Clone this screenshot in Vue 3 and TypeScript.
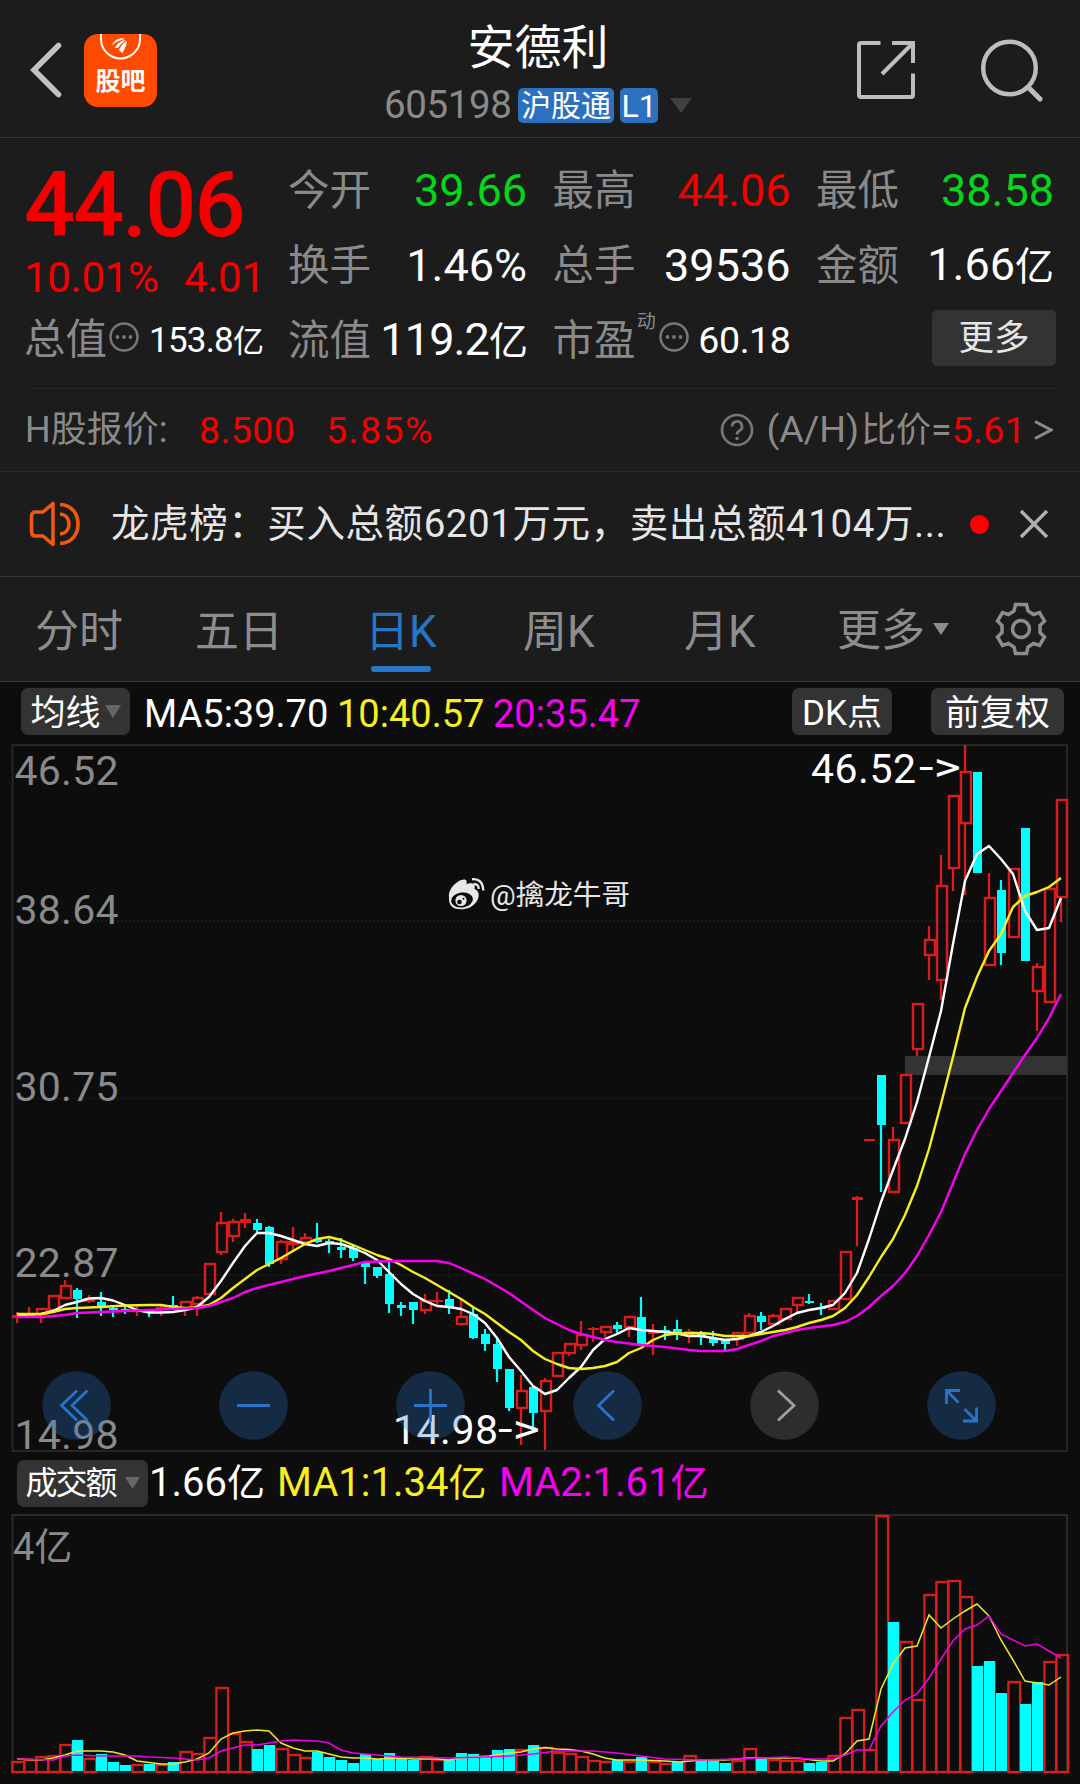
<script setup lang="ts">
type Kind = 'u' | 'd'
type Candle = [Kind, number, number, number, number]

const STEP = 12
const X0 = 17

// kind (u = rising, d = falling), high, body top, body bottom, low
const candles: Candle[] = [
  ['u', 1311, 1314, 1317, 1322], ['u', 1306, 1313, 1315, 1316], ['u', 1307, 1307, 1314, 1322], ['u', 1294, 1294, 1310, 1310],
  ['u', 1279, 1284, 1298, 1298], ['d', 1287, 1289, 1298, 1317], ['u', 1294, 1297, 1301, 1302], ['d', 1291, 1301, 1306, 1315],
  ['d', 1305, 1307, 1309, 1316], ['d', 1305, 1308, 1311, 1313], ['u', 1305, 1308, 1311, 1315], ['d', 1308, 1310, 1312, 1316],
  ['u', 1305, 1306, 1309, 1315], ['d', 1295, 1304, 1306, 1307], ['u', 1300, 1300, 1309, 1315], ['u', 1295, 1296, 1304, 1315],
  ['u', 1262, 1262, 1294, 1294], ['u', 1211, 1221, 1252, 1254], ['u', 1218, 1220, 1236, 1241], ['u', 1212, 1218, 1222, 1227],
  ['d', 1218, 1222, 1229, 1231], ['d', 1225, 1226, 1263, 1266], ['u', 1239, 1240, 1259, 1263], ['u', 1226, 1240, 1244, 1250],
  ['u', 1232, 1236, 1242, 1244], ['d', 1222, 1238, 1241, 1242], ['d', 1238, 1240, 1243, 1252], ['d', 1237, 1246, 1249, 1257],
  ['d', 1245, 1247, 1257, 1260], ['d', 1261, 1261, 1266, 1283], ['d', 1266, 1266, 1275, 1277], ['d', 1261, 1273, 1303, 1312],
  ['d', 1301, 1304, 1307, 1315], ['d', 1301, 1301, 1309, 1323], ['u', 1293, 1299, 1310, 1313], ['u', 1291, 1299, 1301, 1305],
  ['d', 1289, 1298, 1306, 1313], ['u', 1298, 1315, 1324, 1324], ['d', 1306, 1313, 1337, 1338], ['d', 1328, 1333, 1343, 1350],
  ['d', 1337, 1343, 1368, 1381], ['d', 1368, 1368, 1407, 1410], ['u', 1374, 1389, 1408, 1444], ['d', 1386, 1386, 1412, 1429],
  ['u', 1377, 1379, 1411, 1449], ['u', 1351, 1351, 1376, 1376], ['u', 1342, 1342, 1353, 1355], ['u', 1320, 1333, 1345, 1349],
  ['u', 1326, 1327, 1329, 1341], ['u', 1325, 1325, 1332, 1336], ['d', 1321, 1324, 1328, 1332], ['u', 1315, 1315, 1327, 1336],
  ['d', 1296, 1316, 1343, 1345], ['u', 1323, 1331, 1333, 1354], ['d', 1325, 1329, 1331, 1339], ['d', 1319, 1328, 1332, 1339],
  ['u', 1328, 1330, 1334, 1342], ['d', 1330, 1332, 1335, 1344], ['d', 1330, 1337, 1342, 1345], ['d', 1338, 1340, 1343, 1349],
  ['u', 1331, 1331, 1339, 1345], ['u', 1312, 1314, 1333, 1333], ['d', 1311, 1315, 1321, 1329], ['u', 1313, 1314, 1324, 1324],
  ['u', 1307, 1307, 1319, 1319], ['u', 1296, 1296, 1305, 1312], ['d', 1293, 1300, 1302, 1303], ['d', 1302, 1306, 1308, 1314],
  ['u', 1299, 1299, 1309, 1309], ['u', 1250, 1250, 1299, 1299], ['u', 1195, 1196, 1199, 1245], ['u', 1138, 1138, 1140, 1140],
  ['d', 1074, 1074, 1124, 1191], ['u', 1126, 1138, 1192, 1192], ['u', 1073, 1073, 1123, 1123], ['u', 1002, 1002, 1049, 1055],
  ['u', 925, 938, 955, 979], ['u', 854, 884, 980, 999], ['u', 794, 794, 868, 890], ['u', 744, 770, 823, 894],
  ['d', 771, 771, 872, 872], ['u', 872, 896, 965, 965], ['d', 879, 889, 952, 964], ['u', 867, 867, 937, 937],
  ['d', 827, 827, 960, 960], ['u', 962, 965, 991, 1030], ['u', 887, 887, 1002, 1002], ['u', 798, 798, 897, 921],
]

const volumes: [Kind, number][] = (
  'u1760 u1758 u1755 u1754 u1743 d1739 u1757 d1753 d1761 d1764 u1763 d1763 u1763 d1761 u1750 u1752 u1736 u1686 u1732 u1740 ' +
  'd1748 d1744 u1747 u1753 u1756 d1751 d1756 d1759 d1762 d1753 d1758 d1752 d1758 d1759 u1755 u1758 d1759 d1752 d1753 d1755 ' +
  'd1749 d1748 u1748 d1744 u1746 u1751 u1752 u1755 u1759 u1760 d1759 u1760 d1756 u1760 u1762 d1761 u1754 d1759 d1760 d1762 ' +
  'u1759 u1747 d1758 u1758 u1759 u1759 d1762 d1761 u1754 u1716 u1708 u1748 u1514 d1621 u1640 u1698 u1593 u1580 u1579 u1595 ' +
  'd1665 d1660 d1692 u1680 d1703 d1681 u1660 u1653'
)
  .split(' ')
  .map((s) => [s[0] as Kind, Number(s.slice(1))])

const ma5 =
  '17,1314 41,1313 53,1310 65,1304 77,1301 89,1297.5 101,1297 113,1299.5 125,1304 137,1309 149,1311.5 161,1311.5 173,1311 185,1309 197,1306 209,1296 221,1280 233,1262 245,1245 257,1232 269,1232 281,1235 293,1239 305,1243 317,1245 329,1242 341,1243 353,1247 365,1252 377,1259 389,1271 401,1283 413,1293 425,1300 437,1305 449,1306 461,1308 473,1313 485,1322 497,1337 509,1356 521,1370 533,1385 545,1393 557,1389 569,1377 581,1366 593,1349 605,1338 617,1333 629,1327 641,1329 653,1330 665,1331 677,1332.5 689,1335 701,1335 713,1337 725,1339 737,1338 749,1335 761,1331 773,1325 785,1318 797,1312 809,1309 821,1307 833,1304 845,1292 857,1272 869,1238 881,1201 893,1169 905,1138 917,1101 929,1056 941,1010 953,943 965,880 977,853 989,845 1001,858 1013,873 1025,910 1037,929 1049,927 1061,897'
const ma10 =
  '17,1313 41,1313 53,1311 65,1308 77,1307 101,1306 125,1304.5 149,1304 161,1304 173,1306 185,1307 197,1306.5 209,1304 221,1297 233,1287 245,1278 257,1269 269,1263 281,1257 293,1250 305,1243 317,1238 329,1236 341,1239 353,1244 365,1249 377,1254 389,1258 401,1264 413,1271 425,1277 437,1284 449,1291 461,1298 473,1306 485,1313 497,1322 509,1331 521,1339 533,1350 545,1358 557,1363 569,1367 581,1368 593,1367 605,1365 617,1361 629,1352 641,1347 653,1339 665,1334 677,1332.5 701,1332 713,1333 725,1335 749,1335 761,1333 773,1331 785,1329 797,1326 809,1322 821,1319 833,1315 845,1307 857,1294 869,1276 881,1256 893,1238 905,1214 917,1185 929,1148 941,1103 953,1056 965,1007 977,976 989,950 1001,933 1013,906 1025,895 1037,891 1049,886 1061,877'
const ma20 =
  '17,1316 41,1316 65,1314 77,1312 101,1311 125,1310 149,1309 173,1308 197,1307 209,1305 221,1301 233,1297 245,1291 257,1287 281,1281 305,1275 329,1270 353,1264 365,1261 377,1260.5 401,1260 437,1260 449,1262 461,1267 485,1278 509,1292 533,1309 545,1317 557,1323 569,1329 581,1333 593,1336 605,1339 617,1341 641,1344 665,1346 689,1349 701,1350 725,1350 737,1348 749,1344 761,1340 773,1335 797,1329 809,1327 833,1324 845,1321 857,1315 869,1306 881,1295 893,1285 905,1272 917,1255 929,1234 941,1211 953,1182 965,1153 977,1129 989,1108 1001,1090 1013,1072 1025,1054 1037,1037 1049,1017 1061,993'
const volMa1 =
  '17,1758 41,1759 53,1757 65,1754 77,1750 101,1750 113,1751 125,1754 137,1760 161,1763 173,1763 185,1761 197,1758 209,1752 221,1738 233,1732 245,1730 257,1729 269,1730 281,1742 293,1747 305,1750 317,1750 329,1753 341,1756 353,1757 365,1757 377,1758 401,1757 413,1758 437,1758 449,1759 461,1757 489,1755 509,1752 521,1751 533,1748 545,1746.5 557,1748 569,1748.5 581,1750 593,1753 605,1757 617,1759 641,1759 665,1760 680,1761 701,1759 725,1759 749,1757 773,1757 797,1757 821,1760 833,1760 845,1753 857,1740 869,1738 881,1688 893,1663 905,1647 917,1645 929,1614 941,1627 953,1618 965,1610 977,1603 989,1615 1001,1639 1013,1659 1025,1680 1037,1682 1049,1684 1061,1676'
const volMa2 =
  '17,1758 53,1759 65,1755 77,1754 101,1755 137,1755 149,1756 173,1757 197,1759 209,1757 221,1750 233,1747 245,1744 257,1744 269,1742 281,1740 293,1739 317,1740 329,1742 341,1749 353,1752 377,1754 400,1756 449,1757 485,1756 509,1755 533,1753 557,1750 593,1750 617,1752 641,1755 665,1758 701,1759 737,1758 761,1757 785,1756 809,1758 833,1758 845,1754 857,1749 869,1749 881,1725 893,1711 905,1699 917,1693 929,1677 941,1658 953,1640 965,1628 977,1624 989,1615 1001,1633 1013,1639 1025,1645 1037,1643 1049,1650 1061,1657'

const axis = [
  { t: '46.52', y: 783.5 },
  { t: '38.64', y: 922.5 },
  { t: '30.75', y: 1099.5 },
  { t: '22.87', y: 1275.5 },
  { t: '14.98', y: 1448 },
]
const gridY = [920, 1097.5, 1274]

const cells = [
  { k: '今开', v: '39.66', u: '', c: 'green' },
  { k: '最高', v: '44.06', u: '', c: 'red' },
  { k: '最低', v: '38.58', u: '', c: 'green' },
  { k: '换手', v: '1.46%', u: '', c: '' },
  { k: '总手', v: '39536', u: '', c: '' },
  { k: '金额', v: '1.66', u: '亿', c: '' },
  { k: '流值', v: '119.2', u: '亿', c: 'tight' },
]
const cx = (i: number) => X0 + i * STEP
</script>

<template>
  <div class="page">
    <header class="top">
      <svg class="back" width="34" height="62" viewBox="0 0 34 62"><path d="M29.500 6.500 5 31 29.500 55.500" fill="none" stroke="#c2c2c2" stroke-width="5.600" stroke-linecap="round" /></svg>
      <div class="bar-logo">
        <svg width="73" height="30" viewBox="0 0 73 30">
          <path d="M17 0v5a19.500 19.500 0 0 0 39 0V0" fill="none" stroke="#fff" stroke-width="2" />
          <g fill="#fff">
            <path d="M28 11C30 6 37 3 41 5 36 6 32 8 28 11Z" />
            <path d="M31 14C33 9 38 6 41.500 6 39 8 36 11 34 14Z" />
            <path d="M35 16C37 12 40 8 42.500 7 43 11 41 14 38.500 19Z" />
          </g>
        </svg>
        <b>股吧</b>
      </div>
      <div class="name">
        <h1>安德利</h1>
        <div class="code">
          <span class="num">605198</span><i class="tag wide">沪股通</i><i class="tag">L1</i>
          <svg width="22" height="15" viewBox="0 0 22 15"><path d="M0 0h22L11 15Z" fill="#404040" /></svg>
        </div>
      </div>
      <svg class="share" width="60" height="60" viewBox="0 0 60 60" fill="none" stroke="#bdbdbd" stroke-width="4">
        <path d="M24.500 3H5Q3 3 3 5V55Q3 57 5 57H55Q57 57 57 55V33.500" />
        <path d="M36 3H57V23M26 34 56 4" />
      </svg>
      <svg class="find" width="64" height="66" viewBox="0 0 64 66" fill="none" stroke="#bdbdbd" stroke-width="4.400">
        <circle cx="29.500" cy="31" r="26.300" /><path d="M48 50 60 62" stroke-width="5.200" stroke-linecap="round" />
      </svg>
    </header>

    <section class="quote">
      <div class="left">
        <div class="price">44.06</div>
        <div class="chg"><span>10.01%</span><span>4.01</span></div>
        <div class="cap">
          <span class="lab">总值</span>
          <svg class="dots" width="30" height="30" viewBox="0 0 30 30"><circle cx="15" cy="15" r="13.500" fill="none" stroke="#777" stroke-width="2.500" /><g fill="#777"><circle cx="8.500" cy="15" r="1.900" /><circle cx="15" cy="15" r="1.900" /><circle cx="21.500" cy="15" r="1.900" /></g></svg>
          <span class="v">153.8<em>亿</em></span>
        </div>
      </div>
      <div class="grid">
        <div v-for="c in cells" :key="c.k" class="cell">
          <span class="lab">{{ c.k }}</span><span class="val" :class="c.c">{{ c.v }}<em v-if="c.u">{{ c.u }}</em></span>
        </div>
        <div class="cell">
          <span class="lab">市盈</span><sup>动</sup>
          <svg class="dots" width="30" height="30" viewBox="0 0 30 30"><circle cx="15" cy="15" r="13.500" fill="none" stroke="#777" stroke-width="2.500" /><g fill="#777"><circle cx="8.500" cy="15" r="1.900" /><circle cx="15" cy="15" r="1.900" /><circle cx="21.500" cy="15" r="1.900" /></g></svg>
          <span class="val small">60.18</span>
        </div>
        <div class="cell"><button class="more">更多</button></div>
      </div>
    </section>

    <section class="hshare">
      <span class="hl">H股报价:</span><span class="red h1v">8.500</span><span class="red h2v">5.85%</span>
      <span class="grow"></span>
      <svg width="34" height="34" viewBox="0 0 34 34" fill="none" stroke="#777" stroke-width="2.700"><circle cx="17" cy="17" r="15" /><path d="M12 13.500a5 5 0 1 1 7.500 4.300Q17 19 17 21.500" /><circle cx="17" cy="25.500" r="1" fill="#777" stroke-width="1.500" /></svg>
      <span class="ratio">(A/H)<em>比价</em>=</span><span class="red rv">5.61</span>
      <svg class="gt" width="19" height="20" viewBox="0 0 19 20"><path d="M1 1.500 17 10 1 18.500" fill="none" stroke="#8a8a8a" stroke-width="3" /></svg>
    </section>

    <section class="notice">
      <svg width="52" height="46" viewBox="0 0 52 46" fill="none" stroke="#f05a10" stroke-width="3.600" stroke-linejoin="round">
        <path d="M24 2.500V43.500L14 35H6Q3 35 2.500 31V15Q3 11 6 11H14Z" />
        <path d="M31 3.500C43 4 49 13 49 23S43 42 31 42.500" />
        <path d="M31 13C37 13.500 40 18 40 23S37 32.500 31 33" />
      </svg>
      <p>龙虎榜：买入总额6201万元，卖出总额4104万...</p>
      <span class="dot"></span>
      <svg width="30" height="30" viewBox="0 0 30 30"><path d="M2 2 28 28M28 2 2 28" stroke="#b0b0b0" stroke-width="3.400" /></svg>
    </section>

    <nav class="tabs">
      <span class="t1">分时</span><span class="t2">五日</span><span class="t3 on">日K</span><span class="t4">周K</span><span class="t5">月K</span>
      <span class="t6"><em>更多</em><svg width="16" height="12" viewBox="0 0 16 12"><path d="M0 0h16L8 12Z" fill="#8d8d8d" /></svg></span>
      <svg class="gear" width="52" height="54" viewBox="0 0 52 54" fill="none" stroke="#8d8d8d" stroke-width="3.500">
        <path d="M20.500 2.500H31.500L33 9 38.500 12.500 44.500 10.500 49.500 19 45 23.500V30.500L49.500 35 44.500 43.500 38.500 41.500 33 45 31.500 51.500H20.500L19 45 13.500 41.500 7.500 43.500 2.500 35 7 30.500V23.500L2.500 19 7.500 10.500 13.500 12.500 19 9Z" />
        <circle cx="26" cy="27" r="8.500" />
      </svg>
    </nav>

    <main class="charts">
      <div class="legend k">
        <span class="chip c1"><em>均线</em><svg width="16" height="13" viewBox="0 0 16 13"><path d="M0 0h16L8 13Z" fill="#666" /></svg></span>
        <span class="m1">MA5:39.70</span><span class="m2 yellow">10:40.57</span><span class="m3 pink">20:35.47</span>
        <span class="grow"></span>
        <span class="chip c2"><em>DK点</em></span><span class="chip c3"><em>前复权</em></span>
      </div>
      <svg class="plot" width="1080" height="714" viewBox="0 740 1080 714">
        <g fill="none" stroke="#262626" stroke-width="2">
          <rect x="12.500" y="744" width="1054.500" height="706" />
          <path v-for="y in gridY" :key="y" :d="`M13 ${y}H1066`" stroke="#191919" stroke-dasharray="2 2" />
        </g>
        <rect x="905" y="1055" width="162" height="19" fill="#333" />
        <g fill="#8a8a8a" font-size="41">
          <text v-for="a in axis" :key="a.t" x="14.500" :y="a.y" textLength="104">{{ a.t }}</text>
        </g>
        <g v-for="(c, i) in candles" :key="i">
          <template v-if="c[0] === 'u'">
            <path :d="`M${cx(i)} ${c[1]}V${c[2]}M${cx(i)} ${c[3]}V${c[4]}`" stroke="#dc1c1c" stroke-width="2.300" />
            <rect v-if="c[3] - c[2] > 4" :x="cx(i) - 4" :y="c[2] + 1" width="10" :height="c[3] - c[2] - 2" fill="none" stroke="#dc1c1c" stroke-width="2.400" />
            <rect v-else :x="cx(i) - 5" :y="c[2]" width="11" :height="c[3] - c[2]" fill="#dc1c1c" />
          </template>
          <template v-else>
            <path :d="`M${cx(i)} ${c[1]}V${c[4]}`" stroke="#00ffff" stroke-width="2.200" />
            <rect :x="cx(i) - 4" :y="c[2]" width="9" :height="c[3] - c[2]" fill="#00ffff" />
          </template>
        </g>
        <g fill="none" stroke-width="2.400" stroke-linejoin="round">
          <polyline :points="ma5" stroke="#fff" />
          <polyline :points="ma10" stroke="#f8ef20" />
          <polyline :points="ma20" stroke="#f800f0" />
        </g>
        <g fill="#fff" font-size="41">
          <text x="811" y="781.500" textLength="105">46.52</text><text x="919" y="779.500" textLength="42" lengthAdjust="spacingAndGlyphs">-&gt;</text>
          <text x="393" y="1443" textLength="105">14.98</text><text x="498" y="1442" textLength="42" lengthAdjust="spacingAndGlyphs">-&gt;</text>
        </g>
        <g fill="rgba(40,112,200,.29)">
          <circle cx="76.500" cy="1404.500" r="34.300" /><circle cx="253.500" cy="1404.500" r="34.300" /><circle cx="430.500" cy="1404.500" r="34.300" />
          <circle cx="607.500" cy="1404.500" r="34.300" /><circle cx="961.500" cy="1404.500" r="34.300" />
        </g>
        <circle cx="784.500" cy="1404.500" r="34.300" fill="#2d2d2d" />
        <g fill="none" stroke="#2774c8" stroke-width="2.800">
          <path d="M77 1389.500 61.500 1404.500 77 1419.500M87.500 1389.500 72 1404.500 87.500 1419.500" />
          <path d="M237 1404.500H270M414 1404.500H447M430.500 1388V1421" />
          <path d="M614 1389.500 598.500 1404.500 614 1419.500" />
          <path d="M960 1389.500H946.500V1403M947 1390 958.500 1401.500M963 1420H976.500V1406.500M976 1419.500 964.500 1408" />
          <path d="M778 1389.500 794 1404.500 778 1419.500" stroke="#a0a0a0" />
        </g>
        <g fill="#e8e8e8">
          <path d="M449 896C448 888 457 879 464 878.500 467 878.500 467 881 466.500 883.500 470 881.500 476 881.500 474.500 888 479 889.500 480 895 477 900 472 908 462 909.500 455 907.500 451 906 448.500 902 449 896Z" />
          <ellipse cx="462" cy="899" rx="11" ry="7.500" fill="#0d0d0d" transform="rotate(-8 462 899)" />
          <circle cx="461" cy="899.500" r="5.600" /><circle cx="459.500" cy="901" r="2.300" fill="#0d0d0d" /><circle cx="463.500" cy="897.800" r="1" fill="#0d0d0d" />
          <path d="M472 878.200Q482.500 877 483.300 889.500M473.500 883Q479 883 478.600 888" fill="none" stroke="#e8e8e8" stroke-width="2.400" />
          <text x="490" y="904" font-size="28.500" textLength="140" lengthAdjust="spacingAndGlyphs">@擒龙牛哥</text>
        </g>
      </svg>
      <div class="legend v">
        <span class="chip c4"><em>成交额</em><svg width="15" height="12" viewBox="0 0 15 12"><path d="M0 0h15L7.500 12Z" fill="#666" /></svg></span>
        <span class="n1">1.66<em>亿</em></span><span class="n2 yellow">MA1:1.34<em>亿</em></span><span class="n3 pink">MA2:1.61<em>亿</em></span>
      </div>
      <svg class="plot" width="1080" height="274" viewBox="0 1510 1080 274">
        <rect x="12.500" y="1514" width="1054.500" height="257.500" fill="none" stroke="#2a2a2a" stroke-width="2" />
        <text x="13" y="1559" font-size="38" fill="#8a8a8a">4亿</text>
        <g v-for="(v, i) in volumes" :key="i">
          <rect v-if="v[0] === 'u'" :x="i * 12 + 12.400" :y="v[1] + 1" width="11.700" :height="1770 - v[1]" fill="none" stroke="#dc1c1c" stroke-width="2.300" />
          <rect v-else :x="i * 12 + 12" :y="v[1]" width="11.200" :height="1770 - v[1]" fill="#00ffff" />
        </g>
        <polyline :points="volMa1" fill="none" stroke="#f0e630" stroke-width="1.500" />
        <polyline :points="volMa2" fill="none" stroke="#f000e8" stroke-width="1.500" />
      </svg>
    </main>
  </div>
</template>

<style>
body {
  background: #1c1c1c;
}
</style>

<style scoped>
.page {
  width: 1080px;
  height: 1784px;
  overflow: hidden;
  background: #1c1c1c;
  color: #fff;
  font-family: Roboto, "Noto Sans CJK SC", sans-serif;
}
.page * {
  box-sizing: border-box;
}
svg {
  display: block;
  flex: none;
}
.plot {
  overflow: visible;
}
i,
em {
  font-style: normal;
}
span {
  white-space: nowrap;
}
.red {
  color: #f40000;
}
.green {
  color: #00d819;
}
.yellow {
  color: #f8ef20;
}
.pink {
  color: #f800f0;
}
.grow {
  flex: 1;
}
.top {
  height: 138px;
  border-bottom: 1px solid #333;
  display: flex;
  padding-left: 29px;
}
.back {
  margin-top: 39px;
}
.bar-logo {
  width: 73px;
  height: 73px;
  margin: 34px 0 0 21px;
  border-radius: 14px;
  background: #ff4a00;
  display: flex;
  flex-direction: column;
  align-items: center;
  overflow: hidden;
}
.bar-logo b {
  font-size: 25px;
  line-height: 30px;
  margin-top: 3px;
}
.name {
  width: 310px;
  margin-left: 227px;
}
.name h1 {
  margin: 18px 0 0;
  width: 308px;
  text-align: center;
  font-size: 47px;
  font-weight: 400;
  line-height: 60px;
}
.code {
  height: 36px;
  margin-top: 9px;
  display: flex;
  align-items: center;
}
.num {
  width: 134px;
  font-size: 38.5px;
  line-height: 38px;
  letter-spacing: -0.4px;
  color: #8a8a8a;
}
.tag {
  height: 35px;
  width: 38px;
  margin-right: 12px;
  border-radius: 5px;
  background: #2b71c0;
  font-size: 32px;
  line-height: 37px;
  text-align: center;
}
.tag.wide {
  width: 96px;
  margin-right: 6px;
  font-size: 30px;
  line-height: 35px;
}
.share {
  margin: 40px 0 0 162px;
}
.find {
  margin: 37px 0 0 64px;
}
.quote {
  height: 250px;
  padding-left: 24px;
  display: flex;
}
.left {
  width: 264px;
  padding-top: 17px;
}
.price {
  height: 100px;
  line-height: 101px;
  font-size: 90px;
  font-weight: 500;
  letter-spacing: -2px;
  color: #f40000;
}
.chg {
  height: 46px;
  line-height: 46px;
  font-size: 42px;
  letter-spacing: -0.3px;
  color: #f40000;
  display: flex;
}
.chg span:first-child {
  width: 160px;
}
.cap {
  height: 54px;
  margin-top: 12px;
  display: flex;
  align-items: center;
}
.lab {
  font-size: 41.5px;
  line-height: 54px;
  color: #8a8a8a;
}
.cap .dots {
  margin: -7px 0 0 2px;
}
.cap .v {
  margin-left: 10px;
  padding-top: 2px;
  font-size: 35px;
  line-height: 54px;
  letter-spacing: -0.8px;
}
.cap .v em {
  font-size: 31px;
}
.grid {
  width: 768px;
  padding-top: 15px;
  display: grid;
  grid-template-columns: 239px 238px 238px;
  grid-template-rows: 75px 75px 75px;
  column-gap: 25.5px;
}
.cell {
  display: flex;
  align-items: center;
  justify-content: space-between;
}
.val {
  font-size: 45px;
  line-height: 54px;
  padding-top: 1px;
}
.val em {
  font-size: 39px;
}
.tight {
  letter-spacing: -0.9px;
}
.cell sup {
  font-size: 19px;
  line-height: 20px;
  color: #8a8a8a;
  margin-top: -38px;
}
.cell .dots {
  margin: -8px 8px 0 2px;
}
.val.small {
  font-size: 37.5px;
  letter-spacing: -0.4px;
  padding-top: 0;
  margin-top: -2px;
}
.more {
  margin: -6px -2px 0 auto;
  width: 124px;
  height: 56px;
  padding: 0;
  border: 0;
  border-radius: 5px;
  background: #333;
  color: #e6e6e6;
  font: 35.5px/56px Roboto, "Noto Sans CJK SC", sans-serif;
}
.hshare {
  height: 84px;
  padding: 0 27px 0 25px;
  display: flex;
  align-items: center;
  font-size: 37.5px;
  line-height: 50px;
  border-bottom: 1px solid #2a2a2a;
  background: linear-gradient(#272727, #272727) 32px 0 / 1024px 1px no-repeat;
}
.hl {
  width: 174px;
  font-size: 36px;
  color: #8a8a8a;
}
.h1v {
  width: 127px;
  letter-spacing: 0.4px;
}
.h2v {
  letter-spacing: 1.5px;
}
.ratio {
  margin-left: 12px;
  color: #8a8a8a;
}
.rv {
  letter-spacing: 0.3px;
}
.ratio em {
  font-size: 35px;
  margin-left: 2px;
}
.gt {
  margin-left: 8px;
}
.notice {
  height: 105px;
  padding: 0 31px 0 29px;
  display: flex;
  align-items: center;
  border-bottom: 1px solid #383838;
}
.notice p {
  width: 861px;
  margin: 0 0 0 30px;
  font-size: 38.5px;
  line-height: 50px;
  letter-spacing: 0.58px;
  white-space: nowrap;
  color: #e6e6e6;
}
.dot {
  flex: none;
  width: 19px;
  height: 19px;
  border-radius: 50%;
  background: #f00;
  margin-right: 30px;
}
.tabs {
  height: 105px;
  padding-left: 35px;
  display: flex;
  align-items: center;
  border-bottom: 1px solid #383838;
  color: #8d8d8d;
  font-size: 44px;
}
.tabs span {
  height: 104px;
  line-height: 111px;
}
.t1 {
  width: 160px;
}
.t2 {
  width: 170px;
}
.t3 {
  width: 158px;
}
.t4 {
  width: 161px;
}
.t5 {
  width: 153px;
}
.t6 {
  width: 158px;
  display: flex;
  align-items: center;
}
.t6 em {
  padding-top: 4px;
}
.t6 svg {
  margin-left: 8px;
}
.on {
  position: relative;
  color: #2576c6;
}
.on::after {
  content: "";
  position: absolute;
  left: 6px;
  bottom: 9px;
  width: 60px;
  height: 6px;
  border-radius: 3px;
  background: #2576c6;
}
.charts {
  background: #0d0d0d;
}
.legend {
  display: flex;
  align-items: center;
}
.legend.k {
  height: 59px;
  padding: 0 16px 0 21px;
  font-size: 38px;
  line-height: 48px;
}
.m1,
.m2,
.m3 {
  padding-top: 4px;
}
.chip {
  height: 47px;
  border-radius: 7px;
  background: #333;
  display: flex;
  align-items: center;
  justify-content: center;
  font-size: 35px;
  line-height: 50px;
}
.legend.k .chip em {
  padding-top: 4px;
}
.c1 {
  width: 109px;
}
.c1 svg {
  margin-left: 4px;
}
.m1 {
  width: 193px;
  margin-left: 14px;
}
.m2 {
  width: 156px;
}
.c2 {
  width: 100px;
}
.c3 {
  width: 133px;
  margin-left: 39px;
}
.legend.v {
  height: 56px;
  padding-left: 17px;
  font-size: 40px;
  line-height: 50px;
}
.c4 {
  width: 131px;
}
.c4 em {
  font-size: 32px;
  letter-spacing: -2px;
}
.c4 svg {
  margin-left: 9px;
}
.n1 {
  width: 128px;
  margin-left: 1px;
}
.n2 {
  width: 222px;
}
.n1 em,
.n2 em,
.n3 em {
  font-size: 38px;
}
.plot text {
  font-family: Roboto, "Noto Sans CJK SC", sans-serif;
}
</style>
